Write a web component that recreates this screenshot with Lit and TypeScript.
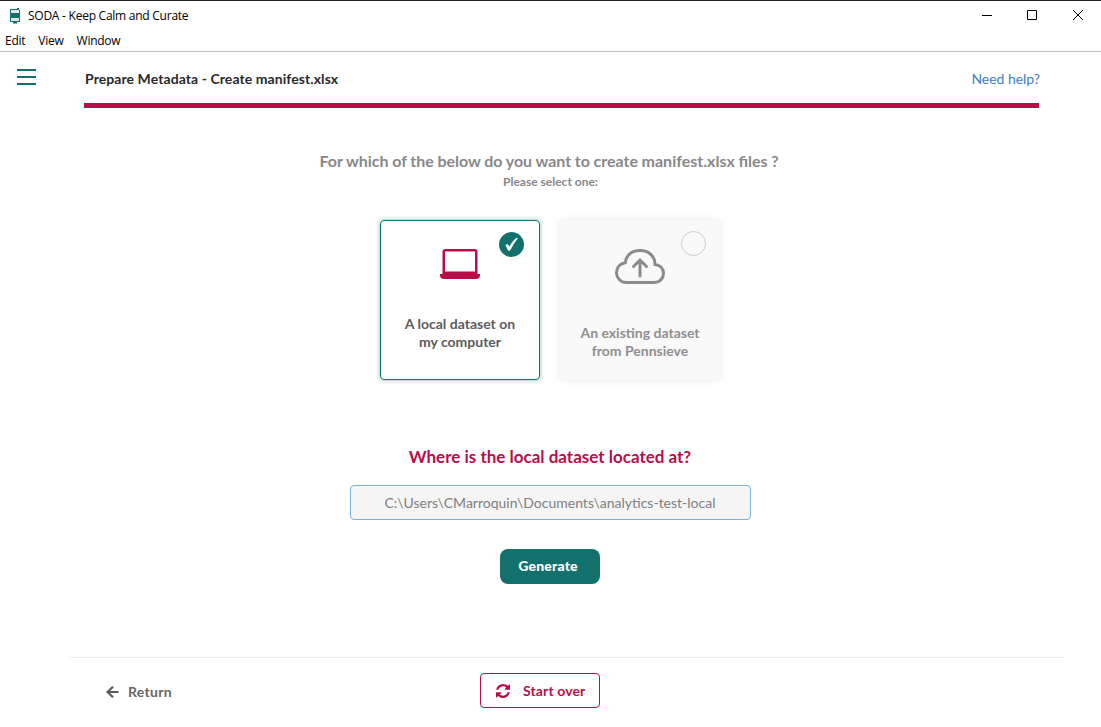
import { LitElement, html, css } from "lit";
import { customElement } from "lit/decorators.js";

@customElement("window-bar")
class WindowBar extends LitElement {
  static styles = css`
    :host { display: block; box-sizing: border-box; height: 52px; border-top: 1px solid #1f1f28; border-bottom: 1px solid #c0c0c0; font-family: "Open Sans", "Noto Sans", sans-serif; font-size: 12px; color: #000; }
    .title { display: flex; align-items: center; height: 29px; padding: 0 17px 0 9px; }
    .logo { display: block; width: 12px; height: 16px; }
    .name { margin-left: 7px; flex: 1; line-height: 16px; letter-spacing: -0.25px; }
    .controls { display: flex; align-self: flex-start; gap: 33px; padding-top: 8px; }
    .controls svg { display: block; }
    .controls svg:last-child { margin-left: 1px; }
    .menu { display: flex; gap: 13px; padding-left: 5px; line-height: 21px; letter-spacing: -0.25px; }
  `;
  render() {
    return html`
      <div class="title">
        <svg class="logo" viewBox="0 0 12 16"><path d="M2 1.500h7l1 1.500v10l-1.500 1.500H2.500L1.500 13V3z" fill="#e4e4e4"/><path d="M1 1h9v1H1zM1 1h1v13H1zM10 2h1v12h-1zM2 5h8v5H2zM2 13h8v1H2zM4 14h4v1.500H4zM8 0h2v1H8z" fill="#13716d"/></svg>
        <span class="name">SODA - Keep Calm and Curate</span>
        <div class="controls">
          <svg width="12" height="12"><path d="M1 6.500h10" stroke="#000"/></svg>
          <svg width="12" height="12"><path d="M1.500 1.500h9v9h-9z" fill="none" stroke="#000"/></svg>
          <svg width="12" height="12"><path d="M1 1l10 10M11 1L1 11" stroke="#000"/></svg>
        </div>
      </div>
      <div class="menu"><span>Edit</span><span>View</span><span>Window</span></div>
    `;
  }
}

@customElement("app-root")
class AppRoot extends LitElement {
  static styles = css`
    :host { display: flex; flex-direction: column; box-sizing: border-box; width: 1101px; height: 727px; overflow: hidden; background: #fff; font-family: Lato, sans-serif; font-size: 14px; color: #5c5c5c; }
    * { box-sizing: border-box; }
    svg { display: block; }
    .head { display: flex; height: 51px; padding-left: 17px; }
    .burger { display: flex; flex-direction: column; gap: 5px; width: 19px; padding-top: 17px; margin-right: 48px; }
    .burger i { height: 2px; background: #13716d; }
    .bar { display: flex; justify-content: space-between; width: 956px; padding: 0 0 0 1px; line-height: 54px; }
    .page { font-weight: 700; color: #2a2a2a; letter-spacing: 0.075px; }
    .help { color: #3d80c0; letter-spacing: -0.03px; }
    .rule { height: 5px; width: 955px; margin-left: 84px; background: #b80d49; }
    .main { display: flex; flex-direction: column; align-items: center; width: 1101px; padding-right: 1px; flex: 1; }
    .question { margin-top: 43px; padding-right: 2px; line-height: 20px; font-size: 16px; font-weight: 700; word-spacing: -0.25px; color: #888; }
    .hint { margin-top: 1px; padding-left: 1px; line-height: 20px; font-size: 12px; font-weight: 700; color: #888; }
    .cards { display: flex; gap: 20px; margin-top: 28px; }
    .card { position: relative; display: flex; flex-direction: column; align-items: center; width: 160px; height: 160px; border-radius: 4px; padding-top: 29px; text-align: center; line-height: 18px; font-weight: 700; }
    .on { border: 1px solid #13716d; padding-top: 28px; box-shadow: 0 0 4px rgba(19, 113, 109, 0.5); }
    .off { background: #f9f9f9; color: #8f8f8f; box-shadow: 0 0 8px rgba(0, 0, 0, 0.09); }
    .on .label { margin-top: 36px; }
    .off .label { margin-top: 40px; }
    .tick { position: absolute; top: 11px; right: 15px; }
    .ring { position: absolute; top: 11px; right: 14px; width: 25px; height: 25px; border: 1px solid #ccc; border-radius: 50%; }
    .where { margin-top: 65px; line-height: 24px; font-size: 17px; font-weight: 700; color: #b80d49; }
    .path { display: flex; align-items: center; justify-content: center; width: 401px; height: 35px; margin: 16px 0 0 1px; padding-right: 1px; border: 1px solid #7fb3d9; border-radius: 4px; background: #f5f5f5; color: #808080; }
    .generate { display: flex; align-items: center; justify-content: center; width: 100px; height: 35px; margin-top: 29px; padding: 0 4px 2px 0; border-radius: 8px; background: #13716d; color: #fff; font-weight: 900; letter-spacing: 0.2px; }
    .foot { display: grid; grid-template-columns: 412px 120px; height: 70px; width: 995px; margin-left: 69px; padding-top: 15px; border-top: 1px solid #ececec; line-height: 37px; font-weight: 700; }
    .return { display: flex; align-items: center; height: 37px; padding-left: 37px; gap: 9px; color: #666; letter-spacing: 0.3px; }
    .restart { display: flex; align-items: center; gap: 13px; height: 35px; margin-left: -1px; padding-left: 15px; width: 120px; border: 1px solid #b80d49; border-radius: 4px; color: #b80d49; letter-spacing: 0.12px; }
  `;
  render() {
    return html`
      <window-bar></window-bar>
      <div class="head">
        <div class="burger"><i></i><i></i><i></i></div>
        <div class="bar"><span class="page">Prepare Metadata - Create manifest.xlsx</span><span class="help">Need help?</span></div>
      </div>
      <div class="rule"></div>
      <div class="main">
        <div class="question">For which of the below do you want to create manifest.xlsx files ?</div>
        <div class="hint">Please select one:</div>
        <div class="cards">
          <div class="card on">
            <svg width="40" height="30" viewBox="0 0 40 30" fill="#b80d49"><path fill-rule="evenodd" d="M5.500 0h29A3 3 0 0 1 37.500 3V25H2.500V3A3 3 0 0 1 5.500 0zM5 2.500V22.500H35V2.500z"/><path d="M0 25h40v1a4 4 0 0 1-4 4H4a4 4 0 0 1-4-4z"/></svg>
            <div class="label">A local dataset on<br />my computer</div>
            <svg class="tick" width="25" height="25" viewBox="0 0 25 25"><circle cx="12.500" cy="12.500" r="12.500" fill="#13716d"/><path d="M6.800 13q2-1.500 3.600 2.200Q13 10 17.200 6.300h1.200q-4 5-7.600 12H9.200Q8.300 15.500 6.800 13z" fill="#fff" stroke="#fff" stroke-width=".8"/></svg>
          </div>
          <div class="card off">
            <svg width="50" height="35" viewBox="0 0 50 35" fill="none" stroke="#8b8b8b" stroke-width="3" stroke-linecap="round"><path d="M11 33.500h28.500a9 9 0 0 0 9-9c0-5-3.500-8.500-8.500-9C40 7 33.500 1.500 25 1.500S11 6.500 10.300 13.700C5 14.500 1.500 18.500 1.500 23.500a9.800 9.800 0 0 0 9.500 10z"/><path d="M25 27V11M18.500 17.500L25 11l6.500 6.500"/></svg>
            <div class="label">An existing dataset<br />from Pennsieve</div>
            <div class="ring"></div>
          </div>
        </div>
        <div class="where">Where is the local dataset located at?</div>
        <div class="path">C:\\Users\\CMarroquin\\Documents\\analytics-test-local</div>
        <div class="generate">Generate</div>
      </div>
      <div class="foot">
        <div class="return"><svg width="13" height="12" viewBox="0 0 13 12" fill="none" stroke="#5c5c5c" stroke-width="2.200"><path d="M12.500 6H1.500M7 .7L1.500 6L7 11.300"/></svg><span>Return</span></div>
        <div class="restart"><svg width="14" height="14" viewBox="0 0 1536 1536" fill="#b80d49"><path d="M1511 928q0 5-1 7-64 268-268 434.500t-478 166.500q-146 0-282.500-55t-243.500-157l-129 129q-19 19-45 19t-45-19-19-45v-448q0-26 19-45t45-19h448q26 0 45 19t19 45-19 45l-137 137q71 66 161 102t187 36q134 0 250-65t186-179q11-17 53-117 8-23 30-23h192q13 0 22.500 9.500t9.500 22.500zm25-800v448q0 26-19 45t-45 19h-448q-26 0-45-19t-19-45 19-45l138-138q-148-137-349-137-134 0-250 65t-186 179q-11 17-53 117-8 23-30 23h-199q-13 0-22.500-9.500t-9.500-22.500v-7q65-268 270-434.500t480-166.500q146 0 284 55.500t245 156.500l130-129q19-19 45-19t45 19 19 45z"/></svg><span>Start over</span></div>
      </div>
    `;
  }
}
